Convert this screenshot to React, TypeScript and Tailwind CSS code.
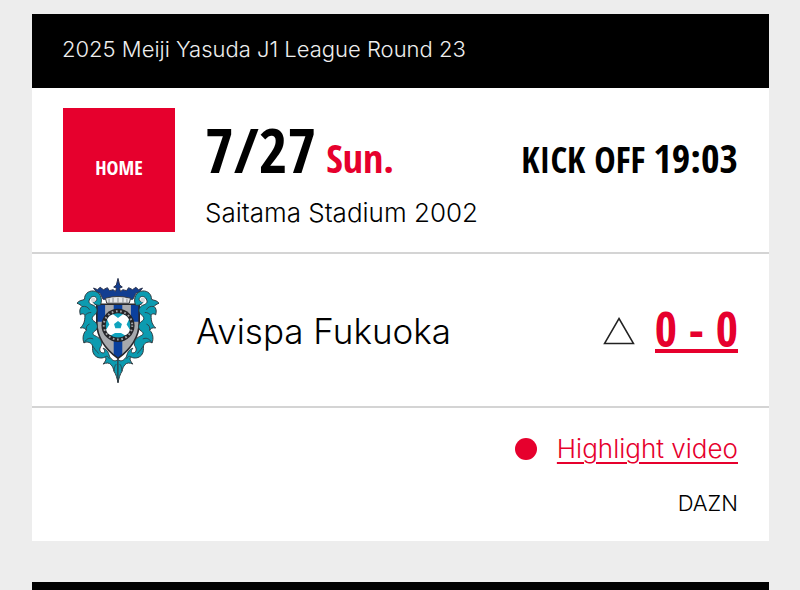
import React from "react";

const fixture = {
  competition: "2025 Meiji Yasuda J1 League Round 23",
  side: "HOME",
  date: "7/27",
  day: "Sun.",
  kickOff: "19:03",
  stadium: "Saitama Stadium 2002",
  opponent: "Avispa Fukuoka",
  score: "0 - 0",
  broadcaster: "DAZN",
};

// Left half of the leaf frame, mirrored for the right half
function CrestLeaves() {
  return (
    <g stroke="#2f3a40" strokeWidth="3" strokeLinejoin="round">
      <path
        fill="#0c9bb0"
        d="M124 120 C132 98 122 78 102 77 C86 76 75 88 76 102 C70 106 60 104 53 114 C60 117 65 119 68 124 C61 129 60 138 63 149 C69 144 75 145 77 151 C77 168 74 178 63 189 C73 187 79 190 81 196 C71 205 69 221 74 234 C84 228 97 233 100 243 C101 253 98 260 106 271 C114 280 127 282 137 277 C144 281 139 290 132 298 C142 293 151 294 156 300 C161 306 163 311 165 320 C171 329 174 340 177 354 L177 284 C168 293 157 286 151 274 C148 263 145 254 132 250 C140 259 137 266 129 264 C121 261 119 252 127 242 C131 227 120 218 107 212 C98 208 100 202 110 196 C119 185 114 174 103 167 C95 161 100 153 109 147 C117 139 115 126 102 120 C93 117 87 113 90 105 C93 94 105 90 111 97 C117 104 108 113 100 107 C104 120 116 121 124 120Z"
      />
      <path
        fill="none"
        strokeWidth="2.5"
        d="M68 124 C80 122 87 126 91 134 M77 151 C82 145 88 142 96 142 M81 196 C80 186 83 180 91 177 M74 234 C83 219 93 218 102 222 M100 243 C105 249 109 258 119 266 M137 277 C143 272 147 275 151 282 M165 320 C166 306 168 302 172 298"
      />
      <circle cx="102" cy="104" r="7" fill="#d8d9dc" stroke="none" />
    </g>
  );
}

function Crest() {
  return (
    <svg
      role="img"
      aria-label={fixture.opponent}
      viewBox="50 36 254 324"
      className="h-27 w-21 shrink-0"
    >
      <path
        d="M103 68 L115 73 L123 66 L133 73 L145 67 L151 76 L163 73 L169 79 L173 69 L164 65 L172 59 L177 39 L182 59 L190 65 L181 69 L185 79 L191 73 L203 76 L209 67 L221 73 L231 66 L239 73 L251 68 L242 80 L231 84 L222 102 L132 102 L123 84 L112 80Z"
        fill="#123e91"
        stroke="#27304a"
        strokeWidth="3"
      />
      <path
        d="M139 99 Q177 88 215 99 L211 114 H143Z"
        fill="#e4e5e7"
        stroke="#3c3d42"
        strokeWidth="3"
      />
      <path
        d="M150 100v12M162 98v14M177 97v15M192 98v14M204 100v12"
        stroke="#77797f"
        strokeWidth="2.5"
      />
      <path
        d="M113 117 H241 V176 C240 221 208 258 177 281 C146 258 114 221 113 176Z"
        fill="#a7a9ad"
      />
      <path
        d="M113 117 H138 V170 H113Z M164 117 H190 V271 L177 281 L164 271Z M216 117 H241 V170 H216Z"
        fill="#0a409d"
      />
      <path
        d="M113 117 H241 V176 C240 221 208 258 177 281 C146 258 114 221 113 176Z"
        fill="none"
        stroke="#27282c"
        strokeWidth="5"
      />
      <CrestLeaves />
      <g transform="translate(354 0) scale(-1 1)">
        <CrestLeaves />
      </g>
      <circle cx="177" cy="181" r="50" fill="#242428" />
      <circle
        cx="177"
        cy="181"
        r="43"
        fill="none"
        stroke="#a4a5a8"
        strokeWidth="6"
        strokeDasharray="5 8"
      />
      <circle cx="177" cy="181" r="37" fill="#0fa3bd" />
      {/* white panels of the ball around the middle pentagon */}
      <path
        fill="#ffffff"
        d="M177 159 L192 147 Q207 153 210 163 L203 178 L213 194 Q210 207 198 211 L186 204 L177 204 L168 204 L156 211 Q144 207 141 194 L151 178 L144 163 Q147 153 162 147Z"
      />
      <path fill="#0fa3bd" d="M177 168 L189 177 L185 190 H169 L165 177Z" />
    </svg>
  );
}

export default function App() {
  return (
    <main className="flex min-h-screen flex-col gap-[41px] bg-[#ededed] pt-3.5 pr-[31px] pl-8 font-['Inter','Noto_Sans_CJK_JP',sans-serif] font-light text-black">
      <article className="bg-white">
        <header className="bg-black px-[30px] pt-[18px] pb-[22px]">
          <h2 className="text-[22px] leading-[34px] text-[#eeeeee]">
            {fixture.competition}
          </h2>
        </header>

        <section className="flex gap-[30px] border-b-2 border-[#d4d4d4] px-[31px] py-5">
          <div className="flex h-31 w-28 shrink-0 items-center justify-center bg-[#e6002d] pb-1 font-['Open_Sans_Condensed','Roboto_Condensed',sans-serif] text-[20px] font-bold text-white">
            {fixture.side}
          </div>
          <div className="flex grow flex-col">
            <div className="flex items-baseline justify-between font-['Open_Sans_Condensed','Roboto_Condensed',sans-serif] font-bold whitespace-nowrap">
              <p className="flex items-baseline gap-2.5 text-[62px] leading-[82px]">
                {fixture.date}
                <span className="text-[40px] leading-10 text-[#e6002d]">
                  {fixture.day}
                </span>
              </p>
              <p className="flex items-baseline gap-2 text-[36px] leading-10">
                KICK OFF
                <time className="text-[40px] leading-10">
                  {fixture.kickOff}
                </time>
              </p>
            </div>
            <p className="pt-1 text-[26px] leading-[38px]">{fixture.stadium}</p>
          </div>
        </section>

        <section className="flex items-center gap-9 border-b-2 border-[#d4d4d4] pt-[23px] pr-[31px] pb-[21px] pl-11">
          <Crest />
          <h3 className="grow text-[35px] leading-12">{fixture.opponent}</h3>
          <div className="flex items-center gap-5">
            <svg viewBox="0 0 32 28" className="h-7 w-8" aria-label="Draw">
              <path
                d="M16 1.5 L30.5 26.5 H1.5Z"
                fill="none"
                stroke="#222222"
                strokeWidth="1.5"
              />
            </svg>
            <a
              href="#result"
              className="border-b-4 border-[#e6002d] font-['Open_Sans_Condensed','Roboto_Condensed',sans-serif] text-[48px] leading-10 font-bold text-[#e6002d]"
            >
              {fixture.score}
            </a>
          </div>
        </section>

        <section className="flex flex-col items-end gap-4 px-[31px] pt-[21px] pb-5">
          <div className="flex items-center gap-5">
            <span className="size-[22px] rounded-full bg-[#e6002d]" />
            <a
              href="#highlight"
              className="text-[26px] leading-10 text-[#e6002d] underline decoration-2 underline-offset-4"
            >
              Highlight video
            </a>
          </div>
          <p className="text-[22px] leading-9">{fixture.broadcaster}</p>
        </section>
      </article>

      <div className="h-2 bg-black" />
    </main>
  );
}
